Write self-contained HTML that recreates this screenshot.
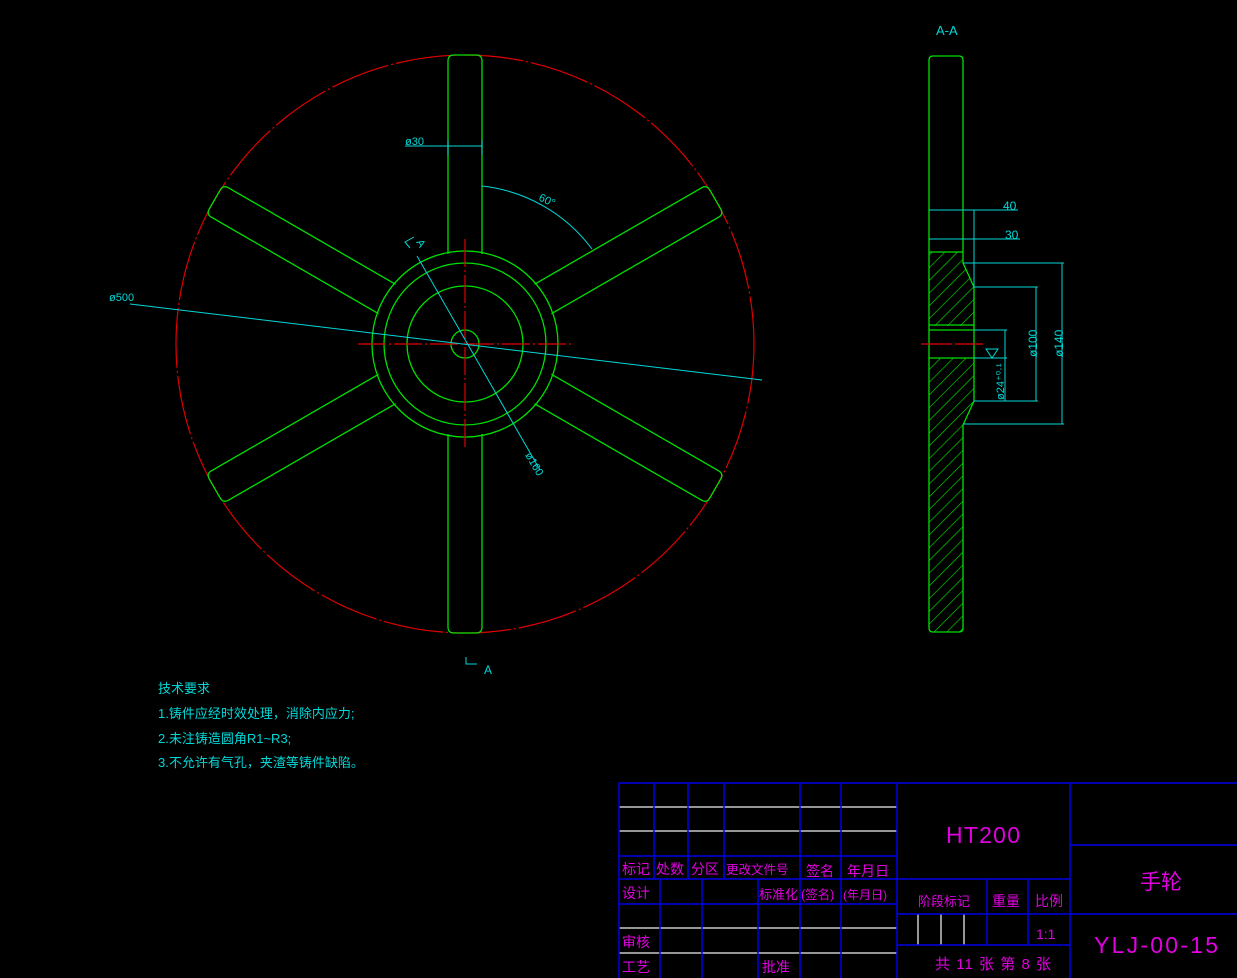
<!DOCTYPE html>
<html><head><meta charset="utf-8"><style>
html,body{margin:0;padding:0;background:#000;}
svg{display:block}
text{font-family:"Liberation Sans","Noto Sans CJK SC",sans-serif;}
</style></head><body>
<svg width="1237" height="978" viewBox="0 0 1237 978" xmlns="http://www.w3.org/2000/svg">
<defs>
<pattern id="h" width="9" height="9" patternUnits="userSpaceOnUse" patternTransform="rotate(45)">
<line x1="0" y1="0" x2="0" y2="9" stroke="#00e000" stroke-width="1.3"/>
</pattern>
<path id="sp" d="M90,-17 L283,-17 Q289,-17 289,-11 L289,11 Q289,17 283,17 L90,17"/>
</defs>
<rect width="1237" height="978" fill="#000"/>

<circle cx="465" cy="344" r="289" fill="none" stroke="#e00000" stroke-width="1.2" stroke-dasharray="60 3 2 3"/>

<g fill="none" stroke="#00e000" stroke-width="1.3">
<g transform="translate(465 344)">
<use href="#sp" transform="rotate(-90)"/>
<use href="#sp" transform="rotate(-30)"/>
<use href="#sp" transform="rotate(30)"/>
<use href="#sp" transform="rotate(90)"/>
<use href="#sp" transform="rotate(150)"/>
<use href="#sp" transform="rotate(210)"/>
</g>
<circle cx="465" cy="344" r="93"/>
<circle cx="465" cy="344" r="81"/>
<circle cx="465" cy="344" r="58"/>
<circle cx="465" cy="344" r="14"/>
</g>
<g stroke="#e00000" stroke-width="1.2" stroke-dasharray="28 3 2 3">
<line x1="358" y1="344" x2="572" y2="344"/>
<line x1="465" y1="239" x2="465" y2="448"/>
</g>

<g stroke="#00d8d8" stroke-width="1" fill="none">
<line x1="130" y1="304" x2="762" y2="380"/>
<line x1="417" y1="256" x2="540" y2="470"/>
<line x1="405" y1="146" x2="482" y2="146"/>
<line x1="448" y1="140" x2="448" y2="155"/>
<line x1="482" y1="140" x2="482" y2="155"/>
<path d="M482,186 A159,159 0 0 1 592,249"/>
<path d="M410,248 L405,242 L414,237"/>
<path d="M466,657 L466,664 L477,664"/>
</g>
<g fill="#00d8d8" font-size="11">
<text x="109" y="301">ø500</text>
<text x="405" y="145">ø30</text>
<text x="538" y="200" transform="rotate(25 538 200)">60°</text>
<text x="525" y="455" transform="rotate(60 525 455)">ø160</text>
<text x="416" y="242" transform="rotate(60 416 242)">A</text>
<text x="484" y="674" font-size="12">A</text>
<text x="936" y="35" font-size="13">A-A</text>
</g>

<path d="M929,252 L963,252 L963,263 L974,287 L974,326 L929,326 Z" fill="url(#h)"/>
<path d="M929,358 L974,358 L974,401 L963,425 L963,628 Q963,632 959,632 L933,632 Q929,632 929,628 Z" fill="url(#h)"/>
<g fill="none" stroke="#00e000" stroke-width="1.3">
<path d="M963,252 L963,60 Q963,56 959,56 L933,56 Q929,56 929,60 L929,628 Q929,632 933,632 L959,632 Q963,632 963,628 L963,425 L974,401 L974,287 L963,263 Z"/>
<line x1="929" y1="252" x2="963" y2="252"/>
<line x1="929" y1="325" x2="974" y2="325"/>
<line x1="929" y1="330" x2="974" y2="330"/>
<line x1="929" y1="358" x2="974" y2="358"/>
</g>
<g stroke="#e00000" stroke-width="1.2"><line x1="921" y1="344" x2="952" y2="344"/><line x1="955" y1="344" x2="983" y2="344"/></g>
<g stroke="#00d8d8" stroke-width="1" fill="none">
<line x1="929" y1="210" x2="1018" y2="210"/>
<line x1="974" y1="210" x2="974" y2="287"/>
<line x1="929" y1="239" x2="1020" y2="239"/>
<line x1="963" y1="263" x2="1064" y2="263"/>
<line x1="963" y1="424" x2="1064" y2="424"/>
<line x1="1062" y1="263" x2="1062" y2="424"/>
<line x1="974" y1="287" x2="1038" y2="287"/>
<line x1="974" y1="401" x2="1038" y2="401"/>
<line x1="1036" y1="287" x2="1036" y2="401"/>
<line x1="974" y1="330" x2="1007" y2="330"/>
<line x1="974" y1="358" x2="1007" y2="358"/>
<line x1="1005" y1="330" x2="1005" y2="401"/>
<path d="M986,349 L992,358 L998,349 Z"/>
</g>
<g fill="#00d8d8" font-size="12">
<text x="1003" y="210">40</text>
<text x="1005" y="239">30</text>
<text x="1063" y="357" transform="rotate(-90 1063 357)">ø140</text>
<text x="1037" y="357" transform="rotate(-90 1037 357)">ø100</text>
<text x="1004" y="400" transform="rotate(-90 1004 400)" font-size="11">ø24⁺⁰·¹</text>
</g>

<g fill="#00d8d8" font-size="13">
<text x="158" y="693">技术要求</text>
<text x="158" y="718">1.铸件应经时效处理，消除内应力;</text>
<text x="158" y="743">2.未注铸造圆角R1~R3;</text>
<text x="158" y="767">3.不允许有气孔，夹渣等铸件缺陷。</text>
</g>

<g stroke="#c8c8c8" stroke-width="1.5">
<line x1="619" y1="807" x2="897" y2="807"/>
<line x1="619" y1="831" x2="897" y2="831"/>
<line x1="619" y1="928" x2="897" y2="928"/>
<line x1="619" y1="953" x2="897" y2="953"/>
<line x1="918" y1="914" x2="918" y2="945"/>
<line x1="941" y1="914" x2="941" y2="945"/>
<line x1="964" y1="914" x2="964" y2="945"/>
</g>
<g stroke="#0000e8" stroke-width="1.5" fill="none">
<rect x="619" y="783" width="620" height="196"/>
<line x1="619" y1="856" x2="897" y2="856"/>
<line x1="619" y1="879" x2="1070" y2="879"/>
<line x1="619" y1="904" x2="897" y2="904"/>
<line x1="654" y1="783" x2="654" y2="879"/>
<line x1="688" y1="783" x2="688" y2="879"/>
<line x1="724" y1="783" x2="724" y2="879"/>
<line x1="800" y1="783" x2="800" y2="978"/>
<line x1="841" y1="783" x2="841" y2="978"/>
<line x1="897" y1="783" x2="897" y2="978"/>
<line x1="660" y1="879" x2="660" y2="978"/>
<line x1="702" y1="879" x2="702" y2="978"/>
<line x1="758" y1="879" x2="758" y2="978"/>
<line x1="1070" y1="783" x2="1070" y2="978"/>
<line x1="1070" y1="845" x2="1237" y2="845"/>
<line x1="897" y1="914" x2="1237" y2="914"/>
<line x1="897" y1="945" x2="1070" y2="945"/>
<line x1="987" y1="879" x2="987" y2="945"/>
<line x1="1028" y1="879" x2="1028" y2="945"/>
</g>
<g fill="#e000e0" font-size="14">
<text x="622" y="874">标记</text><text x="656" y="874">处数</text><text x="691" y="874">分区</text>
<text x="726" y="874" font-size="12.5">更改文件号</text><text x="806" y="876">签名</text><text x="847" y="876">年月日</text>
<text x="622" y="898">设计</text><text x="759" y="899" font-size="13">标准化</text><text x="801" y="899" font-size="12.5">(签名)</text><text x="843" y="899" font-size="12">(年月日)</text>
<text x="918" y="906" font-size="13">阶段标记</text><text x="992" y="906">重量</text><text x="1035" y="906">比例</text>
<text x="1036" y="939">1:1</text>
<text x="622" y="947">审核</text><text x="622" y="972">工艺</text><text x="762" y="972">批准</text>
<text x="935" y="969" font-size="15" textLength="116">共 11 张 第 8 张</text>
<text x="946" y="843" font-size="23" textLength="74">HT200</text>
<text x="1140" y="889" font-size="21">手轮</text>
<text x="1094" y="953" font-size="23" textLength="124">YLJ-00-15</text>
</g>
</svg>
</body></html>
